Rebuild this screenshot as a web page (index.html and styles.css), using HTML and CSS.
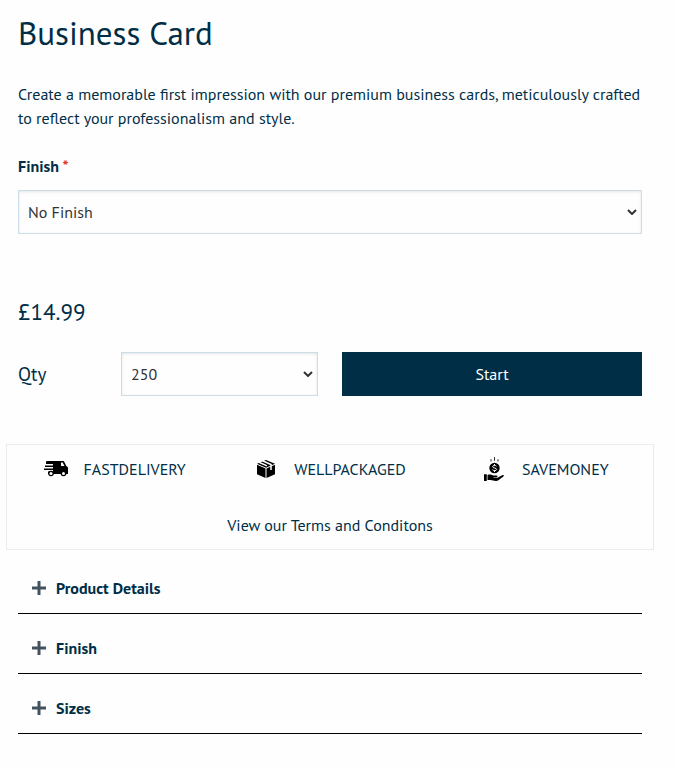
FILE: index.html
```html
<!DOCTYPE html>
<html lang="en">
<head>
  <meta charset="UTF-8" />
  <meta name="viewport" content="width=device-width, initial-scale=1.0"/>
  <title>Business Card</title>
  <link rel="stylesheet" href="styles.css">
</head>
<body>
  <main class="product">
    <h1>Business Card</h1>
    <p class="description">Create a memorable first impression with our premium business cards, meticulously crafted to reflect your professionalism and style.</p>

    <form class="options">
      <label class="option-label" for="finish">Finish <span class="required">*</span></label>
      <div class="select-wrap">
        <select id="finish">
          <option>No Finish</option>
        </select>
        <svg class="arrow" viewBox="0 0 10 6"><path d="M1 1l4 4 4-4"/></svg>
      </div>

      <div class="price">£14.99</div>

      <div class="buy-row">
        <div class="qty">
          <label for="qty">Qty</label>
          <div class="select-wrap">
            <select id="qty">
              <option>250</option>
            </select>
            <svg class="arrow" viewBox="0 0 10 6"><path d="M1 1l4 4 4-4"/></svg>
          </div>
        </div>
        <button type="button" class="start">Start</button>
      </div>
    </form>

    <section class="promises">
      <ul>
        <li>
          <svg viewBox="0 0 24 24">
            <path d="M3 4h12v13H4v-2.500h5V13H0v-1.500h9V10H1V8.500h8V7H2V4.500z"/>
            <path d="M14 4h4.500c1 0 1.500.5 2 1.300L22.300 9c1.200.5 1.700 1.200 1.700 2.300V17H14zm3 1.500V9h3.500l-1.600-3.100c-.2-.3-.4-.4-.8-.4z" fill-rule="evenodd"/>
            <circle cx="7" cy="16.500" r="2.800"/>
            <circle cx="19.500" cy="16.500" r="2.800"/>
            <circle class="hole" cx="7" cy="16.500" r="1.500"/>
            <circle class="hole" cx="19.500" cy="16.500" r="1.500"/>
          </svg>
          FASTDELIVERY
        </li>
        <li>
          <svg viewBox="0 0 24 24">
            <path d="M12 3l9 3.700-9 4-9-4zM3 7.700l8.500 3.800V21L3 17.300zM21 7.700v9.600L12.500 21v-9.500z"/>
            <path class="tape" d="M5 5.300l8 3.600M8.500 3.800l8.500 3.800v5.400"/>
          </svg>
          WELLPACKAGED
        </li>
        <li>
          <svg viewBox="0 0 24 24">
            <path class="rays" d="M9 2.200v2.300M12.500 0v3.800M16 2.200v2.300"/>
            <circle cx="12.500" cy="11" r="5.200"/>
            <path class="dollar" d="M14.500 9.200c-1-1.200-3.900-.9-3.900.5 0 1.700 4 .9 4 2.700 0 1.500-3.200 1.500-4.200.3M12.500 7v1.300M12.500 13.600V15"/>
            <path d="M2 17.300h2.800V24H2zM5.500 18c2-.7 4-.5 5.700.5h3.300c1.200 0 1.400 1.500.2 1.700h-3.200v.6h4l4.700-2.500c1.300-.7 2.200.3 1.200 1.100l-5 3.800c-.8.6-1.600.8-2.600.7l-5.300-.8-3-.2z"/>
          </svg>
          SAVEMONEY
        </li>
      </ul>
      <a href="#terms">View our Terms and Conditons</a>
    </section>

    <section class="accordion">
      <details>
        <summary><svg viewBox="0 0 14 14"><path d="M7 0v14M0 7h14"/></svg>Product Details</summary>
      </details>
      <details>
        <summary><svg viewBox="0 0 14 14"><path d="M7 0v14M0 7h14"/></svg>Finish</summary>
      </details>
      <details>
        <summary><svg viewBox="0 0 14 14"><path d="M7 0v14M0 7h14"/></svg>Sizes</summary>
      </details>
    </section>
  </main>
</body>
</html>
```

FILE: styles.css
```css
* {
  box-sizing: border-box;
}
body {
  margin: 0;
  font-family: "PT Sans", "Noto Sans", sans-serif;
  font-size: 16px;
  line-height: 24px;
  color: #002e47;
  background: #fefefe;
}
.product {
  margin-right: 16px;
  padding: 11px 18px 24px;
}
h1 {
  margin: 0 0 28px;
  font-size: 33px;
  font-weight: normal;
  line-height: 43px;
}
.description {
  margin: 0 0 24px;
}
.option-label {
  display: block;
  margin-bottom: 12px;
  font-weight: bold;
}
.required {
  color: #d9362b;
}
.select-wrap {
  display: grid;
  align-items: center;
}
.select-wrap select,
.select-wrap .arrow {
  grid-area: 1 / 1;
}
.arrow {
  justify-self: end;
  width: 10px;
  height: 6px;
  margin-right: 5px;
  fill: none;
  stroke: #333;
  stroke-width: 2;
  pointer-events: none;
}
select {
  appearance: none;
  width: 100%;
  height: 44px;
  padding: 0 24px 0 9px;
  font: inherit;
  color: #333;
  background: #fefefe;
  border: 1px solid #cbdde9;
  border-radius: 0;
  box-shadow: inset 0 1px 3px rgba(0,0,0,0.1);
}
.price {
  margin-top: 64px;
  font-size: 23px;
  line-height: 28px;
}
.buy-row {
  display: grid;
  grid-template-columns: 1fr 1fr;
  gap: 24px;
  margin-top: 26px;
}
.qty {
  display: grid;
  grid-template-columns: 79px 1fr;
  gap: 24px;
  align-items: center;
}
.qty label {
  font-size: 19px;
}
.start {
  height: 44px;
  font: inherit;
  color: white;
  background: #002e47;
  border: 0;
  cursor: pointer;
}
.promises {
  margin: 48px -12px 0;
  padding: 12px 0;
  text-align: center;
  border: 1px solid #ececec;
}
.promises ul {
  display: grid;
  grid-template-columns: repeat(3, 1fr);
  margin: 0 0 32px;
  padding: 0;
  list-style: none;
}
.promises li {
  display: flex;
  justify-content: center;
  gap: 16px;
}
.promises svg {
  width: 24px;
  height: 24px;
}
.promises .hole {
  fill: white;
}
.promises .rays {
  stroke: #333;
}
.promises .tape {
  fill: none;
  stroke: white;
  stroke-width: 1.5;
}
.promises .dollar {
  fill: none;
  stroke: white;
}
.promises a {
  color: inherit;
  text-decoration: none;
}
.accordion {
  padding-top: 4px;
}
.accordion summary {
  display: flex;
  align-items: center;
  gap: 10px;
  padding: 22px 14px 13px;
  font-weight: bold;
  border-bottom: 1px solid #000;
  list-style: none;
  cursor: pointer;
}
.accordion svg {
  width: 14px;
  height: 14px;
  stroke: #44525f;
  stroke-width: 3;
}
```
